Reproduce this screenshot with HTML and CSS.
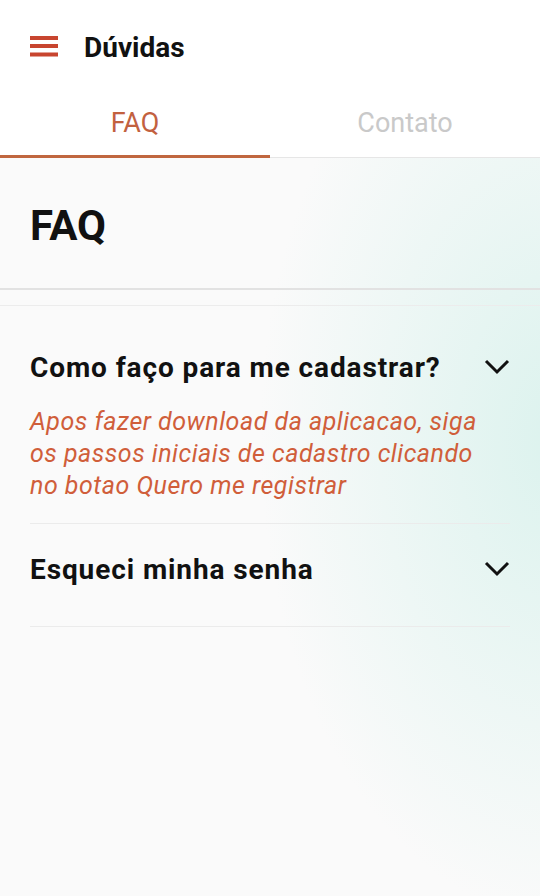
FILE: index.html
```html
<!DOCTYPE html>
<html>
<head>
    <meta charset="utf-8">
    <title>Dúvidas</title>
    <link rel="stylesheet" href="styles.css">
</head>
<body>
    <header class="topbar">
        <button class="menu-btn" aria-label="Menu">
            <svg width="28" height="22" viewBox="0 0 28 22">
                <rect x="0" y="0" width="28" height="4" fill="#c8452f"/>
                <rect x="0" y="8" width="28" height="4" fill="#c8452f"/>
                <rect x="0" y="16.5" width="28" height="4" fill="#c8452f"/>
            </svg>
        </button>
        <h1 class="title">Dúvidas</h1>
    </header>

    <nav class="tabs">
        <div class="tab active">FAQ</div>
        <div class="tab">Contato</div>
    </nav>

    <main class="content">
        <section class="page-head">
            <h2>FAQ</h2>
        </section>

        <div class="faq-list">
            <div class="faq-item open">
                <div class="question">
                    <span>Como faço para me cadastrar?</span>
                    <svg class="chevron" width="26" height="16" viewBox="0 0 26 16">
                        <path d="M2 2 L13 13 L24 2" fill="none" stroke="#111" stroke-width="3"/>
                    </svg>
                </div>
                <p class="answer">Apos fazer download da aplicacao, siga os passos iniciais de cadastro clicando no botao Quero me registrar</p>
            </div>
            <div class="faq-item">
                <div class="question">
                    <span>Esqueci minha senha</span>
                    <svg class="chevron" width="26" height="16" viewBox="0 0 26 16">
                        <path d="M2 2 L13 13 L24 2" fill="none" stroke="#111" stroke-width="3"/>
                    </svg>
                </div>
            </div>
        </div>
    </main>
</body>
</html>
```

FILE: styles.css
```css
body {
    margin: 0;
    font-family: Roboto, "Noto Sans", sans-serif;
    background: #fff;
    color: #111;
}
.topbar {
    height: 90px;
    display: flex;
    align-items: center;
    padding: 4px 30px 0;
    box-sizing: border-box;
}
.menu-btn {
    border: none;
    background: none;
    padding: 0;
    margin: 0 26px 0 0;
    display: flex;
}
.title {
    margin: 0;
    font-size: 28px;
    font-weight: 700;
    color: #111;
}
.tabs {
    display: flex;
    height: 67px;
    border-bottom: 1px solid #e6e6e6;
}
.tab {
    flex: 1;
    display: flex;
    align-items: center;
    justify-content: center;
    font-size: 27px;
    color: #c9c9c9;
    border-bottom: 3px solid transparent;
    margin-bottom: -1px;
}
.tab.active {
    color: #c2613f;
    border-bottom-color: #c0663f;
}
.content {
    min-height: 738px;
    background:
        radial-gradient(ellipse 300px 480px at 560px 280px, rgba(218, 242, 237, 0.95), rgba(240, 248, 246, 0) 100%),
        #fafafa;
}
.page-head {
    height: 132px;
    padding: 4px 30px 0;
    box-sizing: border-box;
    display: flex;
    align-items: center;
    border-bottom: 2px solid #e2e2e2;
}
.page-head h2 {
    margin: 0;
    font-size: 42px;
    font-weight: 700;
    color: #111;
}
.faq-list {
    border-top: 1px solid #ececec;
    margin-top: 15px;
    padding: 0 30px;
}
.faq-item {
    border-bottom: 1px solid #ebebeb;
}
.question {
    display: flex;
    align-items: center;
    justify-content: space-between;
    height: 120px;
    font-size: 28px;
    letter-spacing: 0.9px;
    font-weight: 700;
    color: #111;
}
.faq-item.open .question {
    height: 118px;
    padding-top: 2px;
    margin-bottom: -20px;
}
.answer {
    margin: 0 20px 21px 0;
    font-size: 25px;
    letter-spacing: 0.5px;
    font-style: italic;
    line-height: 32px;
    color: #d05e3a;
}
.faq-item + .faq-item .question {
    height: 90px;
    padding-bottom: 12px;
}
```
